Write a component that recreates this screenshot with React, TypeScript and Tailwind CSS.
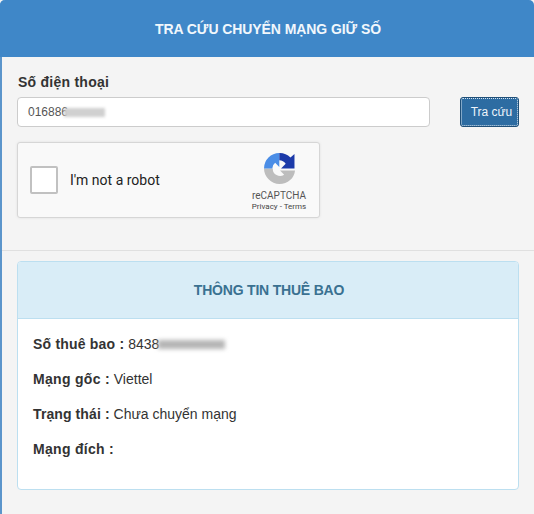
import React from 'react';

function RecaptchaLogo() {
  return (
    <svg width="31" height="31" viewBox="0 0 30 30" className="block">
      <path d="M0 15H8.500A7 7 0 0 0 19.500 21L15.500 17H30C29.500 24.500 23 30 15 30C7 30 0 23 0 15Z" fill="#bdbdbd" />
      <path d="M14.800 0A15 15 0 0 0 0 15H8A7 7 0 0 1 10.800 9.500L14.800 13.500Z" fill="#4a8de6" />
      <path d="M14.800 0A15 15 0 0 1 25.600 4.400L29.500 1V15H16.500L21 10.500A8 8 0 0 0 14.800 7Z" fill="#1c3aa9" />
    </svg>
  );
}

export default function App() {
  return (
    <div className="min-h-[514px] w-[534px] overflow-hidden bg-[#f4f4f4] font-['Liberation_Sans',Arial,sans-serif] text-[14px] text-[#333]">
      <div className="min-h-[514px] rounded-t-[5px] border-l-2 border-[#5b95cb]">
        <div className="-ml-0.5 flex h-[57px] items-center justify-center rounded-t-[5px] bg-[#3f87c8] pl-[2px] pt-[1px] text-[14px] font-bold tracking-[-0.08px] text-[#f1f7fc]">
          TRA CỨU CHUYỂN MẠNG GIỮ SỐ
        </div>

        <div className="pl-[15px] pr-[15px] pt-[15px]">
          <div className="pl-[1px] text-[14px] font-bold leading-[20px] tracking-[0.25px] text-[#333]">
            Số điện thoại
          </div>
          <div className="mt-[5px] flex items-center">
            <div className="flex h-[30px] w-[413px] items-center rounded-[4px] border border-[#ccc] bg-white pl-[10px] text-[12px] text-[#555]">
              <span>016886</span>
              <span className="ml-[-4px] h-[9px] w-[41px] bg-[#d0d0d0] blur-[1.5px]" />
            </div>
            <button className="ml-[30px] flex h-[30px] w-[59px] items-center justify-center rounded-[3px] border border-[#1f4f78] bg-[#2d6ca2] pl-[4px] text-[12px] text-[#eef4fa] outline-1 outline-offset-[-2px] outline-dotted outline-[#d8e4ee]">
              Tra cứu
            </button>
          </div>

          <div className="mt-[15px] flex h-[76px] w-[303px] items-center rounded-[3px] border border-[#d6d6d6] bg-[#f9f9f9] shadow-[0_0_3px_rgba(0,0,0,0.08)]">
            <div className="ml-[12px] h-[28px] w-[28px] rounded-[2px] border-2 border-[#c1c1c1] bg-white" />
            <div className="ml-[12px] font-['Roboto',sans-serif] text-[14px] text-[#222]">I'm not a robot</div>
            <div className="ml-auto mr-[12px] flex w-[56px] flex-col items-center pt-[5px] font-['Roboto',sans-serif] text-[#555]">
              <RecaptchaLogo />
              <div className="mt-[6px] text-[10px] leading-[12px]">reCAPTCHA</div>
              <div className="-mt-[1px] whitespace-nowrap text-[8px] leading-[11px] text-[#444]">Privacy - Terms</div>
            </div>
          </div>
        </div>

        <div className="mt-[32px] border-t border-[#e0e0e0]" />

        <div className="ml-[15px] mr-[15px] mt-[10px] h-[229px] overflow-hidden rounded-[4px] border border-[#bcdff0] bg-white">
          <div className="flex h-[57px] items-center justify-center border-b border-[#bcdff0] bg-[#d9edf7] pl-[2px] text-[14px] font-bold tracking-[-0.2px] text-[#3a7191]">
            THÔNG TIN THUÊ BAO
          </div>
          <div className="flex flex-col gap-[15px] pl-[15px] pt-[15px]">
            <div className="flex h-[20px] items-center">
              <span className="font-bold tracking-[0.2px]">Số thuê bao :</span>
              <span className="ml-[4px]">8438</span>
              <span className="ml-[-1px] h-[9px] w-[67px] bg-[#b5b5b5] blur-[2px]" />
            </div>
            <div className="h-[20px] leading-[20px]">
              <span className="font-bold tracking-[0.3px]">Mạng gốc :</span> Viettel
            </div>
            <div className="h-[20px] leading-[20px]">
              <span className="font-bold tracking-[0.1px]">Trạng thái :</span> Chưa chuyển mạng
            </div>
            <div className="h-[20px] leading-[20px]">
              <span className="font-bold tracking-[0.3px]">Mạng đích :</span>
            </div>
          </div>
        </div>
      </div>
    </div>
  );
}
